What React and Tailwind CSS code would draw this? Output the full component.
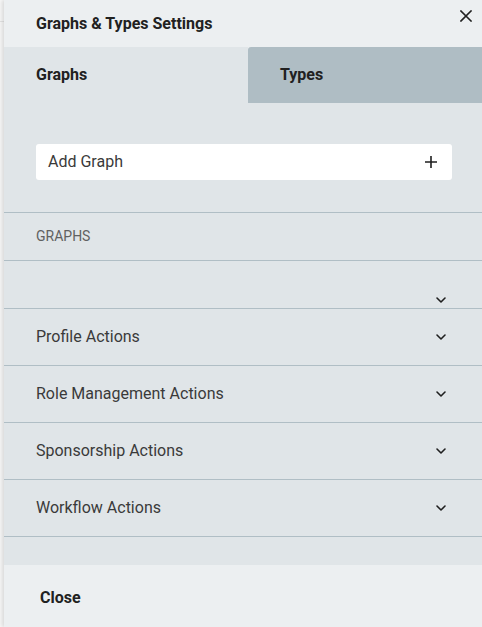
import React from "react";

function Chevron() {
  return (
    <svg width="16" height="16" viewBox="0 0 24 24" fill="none" stroke="#1f1f1f" strokeWidth="2.4" strokeLinecap="round" strokeLinejoin="round">
      <path d="M6 9l6 6 6-6" />
    </svg>
  );
}

const groups = ["Profile Actions", "Role Management Actions", "Sponsorship Actions", "Workflow Actions"];

export default function App() {
  return (
    <div className="w-[482px] h-[627px] flex bg-[#f7f7f7] overflow-hidden" style={{ fontFamily: "Roboto, 'Liberation Sans', sans-serif" }}>
      {/* page behind the drawer */}
      <div className="w-[4px] shrink-0 flex flex-col">
        <div className="h-[22px] border-b border-[#e3e3e3]"></div>
      </div>

      <div className="flex-1 flex flex-col bg-[#e0e5e8] shadow-[-2px_0_4px_rgba(0,0,0,0.12)] relative">
        {/* header */}
        <div className="h-[47px] bg-[#eceff1] flex items-center pl-[32px] text-[16px] font-bold text-[#212121]">
          Graphs &amp; Types Settings
        </div>
        <button className="absolute right-[9px] top-[9px] w-[14px] h-[14px] flex items-center justify-center">
          <svg width="12" height="12" viewBox="0 0 12 12" stroke="#212121" strokeWidth="1.6" strokeLinecap="square">
            <path d="M1 1l10 10M11 1L1 11" />
          </svg>
        </button>

        {/* tabs */}
        <div className="h-[56px] flex bg-[#eceff1]">
          <div className="w-[244px] bg-[#e0e5e8] flex items-center pl-[32px] text-[16px] font-bold text-[#212121]">Graphs</div>
          <div className="flex-1 bg-[#afbdc4] rounded-tl-[3px] flex items-center pl-[32px] text-[16px] font-bold text-[#212121]">Types</div>
        </div>

        <div className="flex-1 flex flex-col">
          <div className="pt-[41px] pb-[32px] pl-[32px] pr-[30px]">
            <div className="h-[36px] bg-white rounded-[3px] flex items-center justify-between pl-[12px] pr-[15px]">
              <span className="text-[16px] text-[#3a3a3a]">Add Graph</span>
              <svg width="12" height="12" viewBox="0 0 12 12" stroke="#1f1f1f" strokeWidth="1.6">
                <path d="M6 0v12M0 6h12" />
              </svg>
            </div>
          </div>

          <div className="border-t border-[#b0bec5] h-[48px] flex items-center pl-[32px] text-[14px] text-[#616161]">GRAPHS</div>

          <div className="border-t border-[#b0bec5] h-[48px] flex items-end justify-end pr-[33px]">
            <Chevron />
          </div>

          {groups.map((g) => (
            <div key={g} className="border-t border-[#b0bec5] h-[57px] flex items-center justify-between pl-[32px] pr-[33px]">
              <span className="text-[16px] text-[#3a3a3a]">{g}</span>
              <Chevron />
            </div>
          ))}
          <div className="border-t border-[#b0bec5]"></div>
        </div>

        {/* footer */}
        <div className="h-[62px] bg-[#eceff1] flex items-center pl-[36px] pt-[3px] text-[16px] font-bold text-[#212121]">Close</div>
      </div>
    </div>
  );
}
